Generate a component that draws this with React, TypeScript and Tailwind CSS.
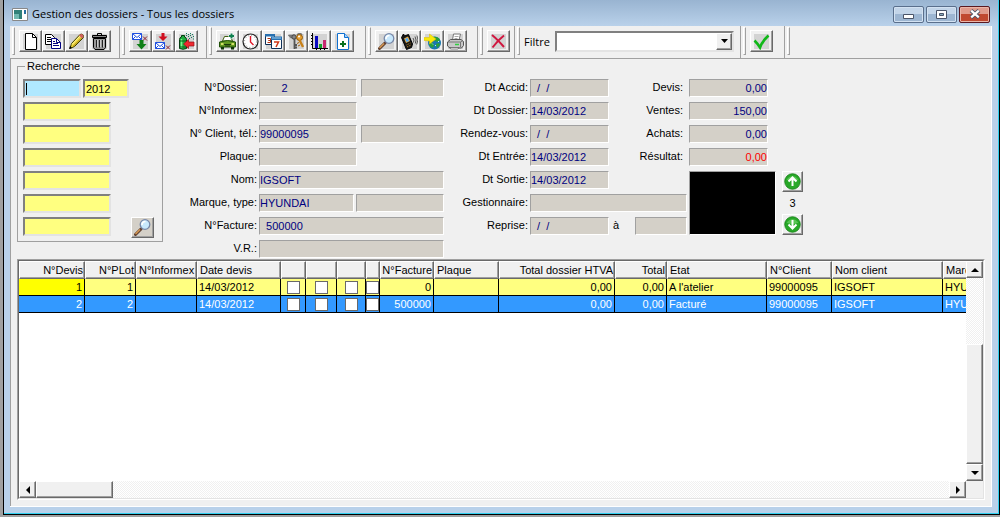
import React, { useState } from "react"
import clsx from "clsx"

const fieldBase = "h-[18px] min-w-0 border border-t-[#a0a0a0] border-l-[#a0a0a0] border-r-white border-b-white bg-[#d4d0c8] text-[11px] leading-4 outline-none"
const searchBase = "h-[19px] border-2 border-t-[#808080] border-l-[#808080] border-r-[#e3e3e3] border-b-[#e3e3e3] px-px text-[11px] leading-4 text-black outline-none"
const raisedEdge = "border border-t-white border-l-white border-r-[#696969] border-b-[#696969] shadow-[inset_-1px_-1px_0_#a0a0a0]"
const raised = `${raisedEdge} bg-[#f0f0f0]`
const track = "bg-[repeating-conic-gradient(#ffffff_0_25%,#f0f0f0_0_50%)] bg-[length:2px_2px]"

/* ---------- icons (17 x 17 grid) ---------- */

const Icon = ({ children, plain }: { children: React.ReactNode; plain?: boolean }) => (
  <svg viewBox="0 0 17 17" className="size-[17px] shrink-0" fill="none" aria-hidden="true">
    {!plain && <path d="M1 1h15v15H1z" fill="#d3d3d3" />}
    {children}
  </svg>
)

const NewIcon = () => (
  <Icon>
    <path d="M3.500 .5h7l4 4v12h-11z" fill="#fff" stroke="#000" />
    <path d="M10.500 .5v4h4" stroke="#000" />
  </Icon>
)

const CopyIcon = () => (
  <Icon>
    <path d="M.5 1.500h6l3 3v7h-9z" fill="#fff" stroke="#000" />
    <path d="M2 4.500h4M2 6.500h5M2 8.500h5" stroke="#000" />
    <path d="M6.500 5.500h5l4 4v6h-9z" fill="#fff" stroke="#000080" />
    <path d="M11.500 5.500v4h4M8 8.500h2M8 10.500h5M8 12.500h6" stroke="#000080" />
  </Icon>
)

const PencilIcon = () => (
  <Icon>
    <path d="M2 15.500l1.500-5L12 1.500q2-1 3 .5t0 3L6.500 13.500z" fill="#f0d840" stroke="#404000" />
    <path d="M4 11.500l8-8.500" stroke="#fff8a0" />
    <path d="M5.500 13l8.500-8.500" stroke="#a08010" />
    <path d="M12 1.500q2-1 3 .5t0 2.500l-1 1-3-3z" fill="#d06060" />
    <path d="M1 16l1-3 2 2z" fill="#000" />
  </Icon>
)

const TrashIcon = () => (
  <Icon>
    <path d="M6.500 2V.5h4V2" stroke="#000" />
    <path d="M1.500 2.500h14v2h-14z" fill="#888" stroke="#000" />
    <path d="M2.500 5.500h12v9l-1.500 2H4l-1.500-2z" fill="#999" stroke="#000" />
    <path d="M5.500 7v7.500M8.500 7v7.500M11.500 7v7.500" stroke="#222" />
    <path d="M6.500 7v7M9.500 7v7M12.500 7v7" stroke="#ddd" strokeWidth=".7" />
  </Icon>
)

const Mail = ({ y }: { y: number }) => (
  <g transform={`translate(0 ${y})`}>
    <path d="M.5 .5h9v6h-9z" fill="#fff" stroke="#2050e0" />
    <path d="M.5 .5L5 4.500 9.500 .5M.5 6.500l3-3M9.500 6.500l-3-3" stroke="#2050e0" />
    <path d="M11 3.500l4 4M15 3.500l-4 4" stroke="#902030" />
  </g>
)

const MailInIcon = () => (
  <Icon>
    <Mail y={0} />
    <path d="M7.500 7h4v4h3l-5 5.500-5-5.500h3z" fill="#108018" />
  </Icon>
)

const MailOutIcon = () => (
  <Icon>
    <Mail y={9} />
    <path d="M6.500 0h3v3.500h3L8 8 3.500 3.500h3z" fill="#d01020" />
  </Icon>
)

const SprayIcon = () => (
  <Icon>
    <path d="M1.500 6.500q0-2 2-2.500V2.500h3V4q2 .5 2 2.500v9q-3.500 1.500-7 0z" fill="#20b040" stroke="#043c10" />
    <path d="M3.500 6v9" stroke="#80f090" strokeWidth="1.500" />
    <path d="M2 8h6M2 14h6" stroke="#046018" />
    <path d="M8 2.500h1M10 1.500h1M12 .5h1M14 1.500h1M10 3.500h1M12 2.500h1M15 3.500h1M13 4.500h1M11 5.500h1M15 6h1M8 .5h1" stroke="#108060" />
    <path d="M5.500 11l5-4.500V9H16v4h-5.500v2.500z" fill="#f02830" stroke="#901018" strokeWidth=".7" />
  </Icon>
)

const CarIcon = () => (
  <Icon>
    <path d="M3.500 8l2-4.500h6l2 4.500z" fill="#fff" stroke="#406010" />
    <path d="M.5 9q8-3 16 0v5H.5z" fill="#609820" stroke="#205008" />
    <path d="M2 14h3v2.500H2zM12 14h3v2.500h-3z" fill="#103808" />
    <path d="M5 11.500h7M6 13h5" stroke="#183808" />
    <path d="M2 11h2.500M12.500 11H15" stroke="#f8f880" strokeWidth="1.500" />
    <path d="M9.500 3h6M12.500 0v6" stroke="#fff" strokeWidth="3" />
    <path d="M10 3h5M12.500 .5v5" stroke="#108050" strokeWidth="2" />
  </Icon>
)

const ClockIcon = () => (
  <Icon>
    <circle cx="8.500" cy="8.500" r="7.500" fill="#fff" stroke="#222" strokeWidth="1.200" />
    <circle cx="8.500" cy="8.500" r="6" stroke="#888" strokeDasharray="1 2.140" />
    <path d="M8.500 3v6l3 3" stroke="#e01828" strokeWidth="1.400" />
  </Icon>
)

const CalendarIcon = () => (
  <Icon>
    <path d="M.5 1.500h9v10h-9z" fill="#fff" stroke="#103058" />
    <path d="M0 1h10v2.500H0z" fill="#2870b0" />
    <path d="M2.500 5.500h3v2h-2 2v2h-3" stroke="#b03010" />
    <path d="M6.500 4.500h10v11h-10z" fill="#fff" stroke="#103058" />
    <path d="M6 3.500h11V7H6z" fill="#2870b0" />
    <path d="M7 5h9" stroke="#a0d0f0" />
    <path d="M9 9h4.500l-2.500 5" stroke="#d03818" strokeWidth="1.500" />
  </Icon>
)

const KeysIcon = () => (
  <Icon>
    <path d="M1 2.500h5l2 2H3zM9 2q3-3 5 0" stroke="#777" strokeWidth="1.500" />
    <circle cx="6" cy="4" r="2.200" fill="#888" stroke="#444" />
    <path d="M6.500 6v10M7 12h2M7 14.500h2" stroke="#555" strokeWidth="1.800" />
    <circle cx="11.500" cy="4.500" r="3" fill="#e8a030" stroke="#905808" />
    <circle cx="11" cy="3.500" r="1" fill="#fff" />
    <path d="M11.500 7l3.500 7" stroke="#c88018" strokeWidth="2.400" />
    <path d="M11 9.500l-2 1M12 12l-2 1" stroke="#a06010" />
  </Icon>
)

const ChartIcon = () => (
  <Icon>
    <path d="M1.500 0v15.500H17" stroke="#000" />
    <path d="M0 2.500h1M0 5.500h1M0 8.500h1M0 11.500h1M5.500 16v1M9.500 16v1M13.500 16v1" stroke="#000" />
    <path d="M4 3h3v12H4z" fill="#0808c0" />
    <path d="M8 11h3v4H8z" fill="#10a028" />
    <path d="M12 7h3v8h-3z" fill="#c82870" />
  </Icon>
)

const AddPageIcon = () => (
  <Icon>
    <path d="M3.500 .5h7l4 4v12h-11z" fill="#fff" stroke="#1070d0" />
    <path d="M10.500 .5v4h4" fill="#a0d0ff" stroke="#1070d0" />
    <path d="M6 11h6M9 8v6" stroke="#087020" strokeWidth="2" />
  </Icon>
)

const LoupeIcon = ({ plain }: { plain?: boolean }) => (
  <Icon plain={plain}>
    <path d="M1.500 15.500L7 10" stroke="#604030" strokeWidth="3" strokeLinecap="round" />
    <path d="M1.500 15L6 10.500" stroke="#d89850" strokeWidth="1.400" />
    <circle cx="11" cy="5.500" r="4.800" fill="#c8e8fc" stroke="#7888a8" strokeWidth="1.300" />
    <path d="M8 6q0-3.500 3.500-3.500" stroke="#fff" strokeWidth="1.600" />
  </Icon>
)

const PhoneIcon = () => (
  <Icon>
    <path d="M.5 4.500L2.500 1l1 2 4-1.500 4 9.500-1 3.500-5 2z" fill="#181818" stroke="#000" />
    <path d="M3 5.500l4-2L9 8l-4 2z" fill="#f0b040" />
    <path d="M4 6l2.500-1.200L8 8l-2.500 1z" fill="#50a8f8" />
    <path d="M5.500 12l4-2M6 14l4-2" stroke="#d09020" strokeDasharray="1 1" />
    <path d="M12 5q1.500 2 .5 4.500M14 3.500q2 3.500 .3 7M16 2.500q2 4.500-.3 9" stroke="#333" strokeWidth=".8" />
  </Icon>
)

const GlobeIcon = () => (
  <Icon>
    <circle cx="10.500" cy="10" r="6.500" fill="#1878b0" />
    <path d="M9 4q5-1 7 3l-2 2-3-1zM6 9l3 1 1 3-2 2-3-3zM12 11l3-1 1 2-3 3z" fill="#28a038" />
    <path d="M8 10.500l1 1M11 12l1 1M14 8l1 1" stroke="#b0f0ff" />
    <path d="M0 4.500h5.500V1L12 6l-6.500 5V8L0 7.500z" fill="#f8e808" stroke="#d8b808" strokeWidth=".5" />
  </Icon>
)

const PrinterIcon = () => (
  <Icon>
    <path d="M5.500 7l1-6h7l-1.500 6z" fill="#fff" stroke="#777" />
    <path d="M7.500 3.500h4M7.500 5.500h3" stroke="#aaa" />
    <path d="M.5 9l3-2.500h10.500l2.500 2v4l-2 2.500H3L.5 13z" fill="#c8c8c8" stroke="#555" />
    <path d="M1 9h12.500l2.500-1.500M13.500 9v5" stroke="#777" />
    <path d="M3 14.500h9l-1 1.500H3.500z" fill="#fff" stroke="#555" strokeWidth=".7" />
    <path d="M8 11.500h4" stroke="#30d040" strokeWidth="1.500" />
  </Icon>
)

const CrossIcon = () => (
  <Icon>
    <path d="M2 2q5 4 12 12" stroke="#d01840" strokeWidth="2" />
    <path d="M14 2.500Q8 7 2.500 14.500" stroke="#d01840" strokeWidth="2" />
  </Icon>
)

const CheckIcon = () => (
  <Icon>
    <path d="M1.500 7.500q3 3 5.500 7 2-6 8.500-12" stroke="#10b818" strokeWidth="2.600" />
  </Icon>
)

const RoundArrow = ({ down }: { down?: boolean }) => (
  <Icon plain>
    <circle cx="8.500" cy="8.500" r="7.800" fill="#28a828" stroke="#188018" strokeWidth=".8" />
    <path d="M2.500 6.500q6-7 12 0-6 3-12 0z" fill="#78d870" opacity=".6" />
    <path d={down ? "M8.500 4v8.500M4.500 8.500l4 4 4-4" : "M8.500 13V4.500M4.500 8.500l4-4 4 4"} stroke="#fff" strokeWidth="2" />
  </Icon>
)

/* ---------- toolbar ---------- */

const ToolButton = ({ label, children }: { label: string; children: React.ReactNode }) => (
  <button
    type="button"
    title={label}
    aria-label={label}
    className={clsx("flex h-[22px] w-[23px] items-center justify-center", raised)}
  >
    {children}
  </button>
)

const Band = ({ className, children }: { className?: string; children?: React.ReactNode }) => (
  <div className={clsx("flex h-8 items-center pb-0.5 pl-0.5", className)}>
    <span className="mr-1 h-7 w-[3px] border border-t-white border-r-[#a0a0a0] border-b-[#a0a0a0] border-l-white" />
    {children}
  </div>
)

const Toolbar = () => {
  const [filter, setFilter] = useState("")

  return (
    <div className="flex divide-x divide-[#a0a0a0] bg-[#f0f0f0]">
      <Band className="pr-2">
        <ToolButton label="Nouveau"><NewIcon /></ToolButton>
        <ToolButton label="Copier"><CopyIcon /></ToolButton>
        <ToolButton label="Modifier"><PencilIcon /></ToolButton>
        <ToolButton label="Supprimer"><TrashIcon /></ToolButton>
      </Band>
      <Band className="pr-2">
        <ToolButton label="Recevoir"><MailInIcon /></ToolButton>
        <ToolButton label="Envoyer"><MailOutIcon /></ToolButton>
        <ToolButton label="Peinture"><SprayIcon /></ToolButton>
      </Band>
      <Band className="pr-[11px]">
        <ToolButton label="Véhicule"><CarIcon /></ToolButton>
        <ToolButton label="Heures"><ClockIcon /></ToolButton>
        <ToolButton label="Agenda"><CalendarIcon /></ToolButton>
        <ToolButton label="Clés"><KeysIcon /></ToolButton>
        <ToolButton label="Statistiques"><ChartIcon /></ToolButton>
        <ToolButton label="Ajouter"><AddPageIcon /></ToolButton>
      </Band>
      <Band className="pr-[10px]">
        <ToolButton label="Rechercher"><LoupeIcon /></ToolButton>
        <ToolButton label="Téléphone"><PhoneIcon /></ToolButton>
        <ToolButton label="Exporter"><GlobeIcon /></ToolButton>
        <ToolButton label="Imprimer"><PrinterIcon /></ToolButton>
      </Band>
      <Band className="pr-1">
        <ToolButton label="Annuler"><CrossIcon /></ToolButton>
      </Band>
      <Band className="pr-[6px]">
        <label htmlFor="filtre" className="w-[31px] pt-0.5 font-['Open_Sans',sans-serif] text-[11px]">
          Filtre
        </label>
        <div className="relative">
          <select
            id="filtre"
            value={filter}
            onChange={(e) => setFilter(e.target.value)}
            className="block h-[21px] w-[179px] appearance-none border-2 border-t-[#808080] border-r-[#e3e3e3] border-b-[#e3e3e3] border-l-[#808080] bg-white px-1 text-[11px] outline-none"
          >
            <option value=""></option>
            <option value="all">Tous les dossiers</option>
          </select>
          <span className={clsx("pointer-events-none absolute top-0.5 right-0.5 flex h-[17px] w-4 items-center justify-center", raised)}>
            <svg viewBox="0 0 7 4" className="h-1 w-[7px]"><path d="M0 0h7L3.500 4z" /></svg>
          </span>
        </div>
      </Band>
      <Band className="pr-[11px]">
        <ToolButton label="Valider"><CheckIcon /></ToolButton>
      </Band>
      <Band className="flex-1" />
    </div>
  )
}

/* ---------- form ---------- */

const Label = ({ htmlFor, children, className }: { htmlFor: string; children: React.ReactNode; className?: string }) => (
  <label htmlFor={htmlFor} className={clsx("pb-0.5 text-right whitespace-nowrap", className)}>
    {children}
  </label>
)

const Field = ({ id, value = "", label, className = "text-[#000080]" }: { id: string; value?: string; label?: string; className?: string }) => (
  <input id={id} readOnly value={value} aria-label={label} className={clsx(fieldBase, className)} />
)

const SearchPanel = () => (
  <fieldset className="mt-px w-[146px] shrink-0 self-start border border-[#a0a0a0] pt-[7px] pr-1 pb-[3px] pl-[5px]">
    <legend className="ml-0.5 px-0.5 leading-3">Recherche</legend>
    <div className="flex flex-col gap-1">
      <div className="flex gap-0.5">
        <div className={clsx("flex w-[58px] items-center bg-[#b0e8ff]", searchBase)}>
          <span className="h-3 w-px bg-black" />
          <input aria-label="Numéro" className="min-w-0 flex-1 bg-transparent outline-none" />
        </div>
        <input aria-label="Année" defaultValue="2012" className={clsx("w-[46px] bg-[#ffff80]", searchBase)} />
      </div>
      {["Informex", "Client", "Plaque", "Nom", "Marque"].map((name) => (
        <input key={name} aria-label={name} className={clsx("w-[88px] bg-[#ffff80]", searchBase)} />
      ))}
      <div className="flex items-start gap-5">
        <input aria-label="Facture" className={clsx("w-[88px] bg-[#ffff80]", searchBase)} />
        <button type="button" aria-label="Rechercher" className={clsx("flex h-[21px] w-[23px] items-center justify-center bg-[#d4d0c8]", raisedEdge)}>
          <LoupeIcon plain />
        </button>
      </div>
    </div>
  </fieldset>
)

const DossierFields = () => (
  <div className="grid shrink-0 grid-cols-[94px_185px] content-start gap-x-0.5 gap-y-[5px] pt-5">
    <Label htmlFor="dossier">N°Dossier:</Label>
    <div className="flex gap-1">
      <Field id="dossier" value="       2" className="w-[98px] text-[#000080]" />
      <Field id="dossier2" label="N°Dossier complément" className="flex-1" />
    </div>
    <Label htmlFor="informex">N°Informex:</Label>
    <Field id="informex" className="w-[98px]" />
    <Label htmlFor="client">N° Client, tél.:</Label>
    <div className="flex gap-1">
      <Field id="client" value="99000095" className="w-[98px] text-[#000080]" />
      <Field id="tel" label="Téléphone" className="flex-1" />
    </div>
    <Label htmlFor="plaque">Plaque:</Label>
    <Field id="plaque" className="w-[98px]" />
    <Label htmlFor="nom">Nom:</Label>
    <Field id="nom" value="IGSOFT" />
    <Label htmlFor="marque">Marque, type:</Label>
    <div className="flex gap-0.5">
      <Field id="marque" value="HYUNDAI" className="w-[95px] text-[#000080]" />
      <Field id="type" label="Type" className="flex-1" />
    </div>
    <Label htmlFor="facture">N°Facture:</Label>
    <Field id="facture" value="  500000" />
    <Label htmlFor="vr">V.R.:</Label>
    <Field id="vr" />
  </div>
)

const dateRows = [
  { id: "accid", label: "Dt Accid:", value: "  /  /", total: "devis", totalLabel: "Devis:", amount: "0,00" },
  { id: "dtdossier", label: "Dt Dossier:", value: "14/03/2012", total: "ventes", totalLabel: "Ventes:", amount: "150,00" },
  { id: "rdv", label: "Rendez-vous:", value: "  /  /", total: "achats", totalLabel: "Achats:", amount: "0,00" },
  { id: "entree", label: "Dt Entrée:", value: "14/03/2012", total: "resultat", totalLabel: "Résultat:", amount: "0,00" },
]

const DateFields = () => (
  <div className="grid grid-cols-[84px_79px_76px_auto] content-start gap-x-0.5 gap-y-[5px] pt-5">
    {dateRows.map((row) => (
      <React.Fragment key={row.id}>
        <Label htmlFor={row.id}>{row.label}</Label>
        <Field id={row.id} value={row.value} />
        <Label htmlFor={row.total} className="pr-1">{row.totalLabel}</Label>
        <Field
          id={row.total}
          value={row.amount}
          className={clsx("w-[79px] text-right", row.total === "resultat" ? "text-[#ff0000]" : "text-[#000080]")}
        />
      </React.Fragment>
    ))}
    <Label htmlFor="sortie">Dt Sortie:</Label>
    <Field id="sortie" value="14/03/2012" />
    <span />
    <div className="row-span-3 flex gap-1.5">
      <div className="w-[87px] border border-t-[#a0a0a0] border-r-white border-b-white border-l-[#a0a0a0] bg-black" />
      <div className="flex flex-col items-center justify-between">
        <button type="button" aria-label="Précédent" className={clsx("flex size-[21px] items-center justify-center", raised)}>
          <RoundArrow />
        </button>
        <span className="leading-4">3</span>
        <button type="button" aria-label="Suivant" className={clsx("flex size-[21px] items-center justify-center", raised)}>
          <RoundArrow down />
        </button>
      </div>
    </div>
    <Label htmlFor="gestionnaire">Gestionnaire:</Label>
    <Field id="gestionnaire" className="col-span-2" />
    <Label htmlFor="reprise">Reprise:</Label>
    <Field id="reprise" value="  /  /" />
    <div className="flex justify-between pl-0.5">
      <label htmlFor="heure">à</label>
      <Field id="heure" className="w-[52px]" />
    </div>
  </div>
)

/* ---------- grid ---------- */

interface Column {
  title: string
  width: string
  right?: boolean
  check?: boolean
}

const columns: Column[] = [
  { title: "N°Devis", width: "w-[66px]", right: true },
  { title: "N°PLot", width: "w-[51px]", right: true },
  { title: "N°Informex", width: "w-[61px]" },
  { title: "Date devis", width: "w-[84px]" },
  { title: "", width: "w-[25px]", check: true },
  { title: "", width: "w-[31px]", check: true },
  { title: "", width: "w-[29px]", check: true },
  { title: "", width: "w-[14px]", check: true },
  { title: "N°Facture", width: "w-[54px]", right: true },
  { title: "Plaque", width: "w-[65px]" },
  { title: "Total dossier HTVA", width: "w-[116px]", right: true },
  { title: "Total", width: "w-[52px]", right: true },
  { title: "Etat", width: "w-[100px]" },
  { title: "N°Client", width: "w-[65px]" },
  { title: "Nom client", width: "w-[111px]" },
  { title: "Marque", width: "w-[60px]" },
]

const rows = [
  ["1", "1", "", "14/03/2012", "", "", "", "", "0", "", "0,00", "0,00", "A l'atelier", "99000095", "IGSOFT", "HYUNDAI"],
  ["2", "2", "", "14/03/2012", "", "", "", "", "500000", "", "0,00", "0,00", "Facturé", "99000095", "IGSOFT", "HYUNDAI"],
]

const DossierTable = () => {
  const [selected, setSelected] = useState(1)

  return (
    <table className="w-[984px] table-fixed border-separate border-spacing-0 whitespace-nowrap">
      <thead>
        <tr>
          {columns.map((col, i) => (
            <th
              key={i}
              className={clsx(
                "h-[18px] overflow-hidden p-0 leading-4 font-normal",
                raised,
                col.width,
                col.right ? "pr-px text-right" : "pl-0.5 text-left",
              )}
            >
              {col.title}
            </th>
          ))}
        </tr>
      </thead>
      <tbody>
        {rows.map((row, r) => (
          <tr key={r} onClick={() => setSelected(r)} className={r === selected ? "bg-[#3399ff] text-white" : "bg-[#ffff80] text-black"}>
            {columns.map((col, i) => (
              <td
                key={i}
                className={clsx(
                  "h-[17px] overflow-hidden border-r border-b border-black p-0 leading-4",
                  col.check ? "text-center" : col.right ? "pr-0.5 text-right" : "pl-0.5",
                  i === 0 && r !== selected && "bg-[#ffff00]",
                )}
              >
                {col.check ? (
                  <input
                    type="checkbox"
                    aria-label={`Option ${i - 3}, devis ${row[0]}`}
                    className="mx-auto block size-[13px] appearance-none border border-[#696969] bg-white checked:bg-[#3399ff]"
                  />
                ) : (
                  row[i]
                )}
              </td>
            ))}
          </tr>
        ))}
      </tbody>
    </table>
  )
}

const ScrollButton = ({ label, path, className }: { label: string; path: string; className: string }) => (
  <button type="button" aria-label={label} className={clsx("flex shrink-0 items-center justify-center", raised, className)}>
    <svg viewBox="0 0 8 8" className="size-2"><path d={path} /></svg>
  </button>
)

const DossierGrid = () => (
  <div className="mr-[6px] mb-[6px] ml-[6px] flex flex-1 flex-col border border-t-[#a0a0a0] border-r-white border-b-white border-l-[#a0a0a0]">
    <div className="flex flex-1 flex-col border border-t-[#696969] border-r-[#e3e3e3] border-b-[#e3e3e3] border-l-[#696969] bg-white">
      <div className="flex flex-1">
        <div className="w-0 flex-1 overflow-hidden">
          <DossierTable />
        </div>
        <div className={clsx("flex w-[17px] flex-col", track)}>
          <ScrollButton label="Haut" path="M0 6h8L4 2z" className="h-[17px]" />
          <div className="flex-1" />
          <div className={clsx("h-[120px]", raised)} />
          <ScrollButton label="Bas" path="M0 2h8L4 6z" className="h-[17px]" />
        </div>
      </div>
      <div className="flex h-[17px]">
        <div className={clsx("flex flex-1", track)}>
          <ScrollButton label="Gauche" path="M6 0v8L2 4z" className="w-[17px]" />
          <div className={clsx("w-[77px]", raised)} />
          <div className="flex-1" />
          <ScrollButton label="Droite" path="M2 0v8l4-4z" className="w-[17px]" />
        </div>
        <div className="w-[17px] bg-[#f0f0f0]" />
      </div>
    </div>
  </div>
)

/* ---------- window ---------- */

const captionButton = "flex h-[17px] w-[31px] items-center justify-center rounded-[2px] border"
const captionBlue = "border-[#5a6f8c] bg-linear-to-b from-[#c3d5e9] from-50% to-[#9db6d2] to-50% shadow-[inset_0_0_0_1px_#d3e2f2]"

const TitleBar = () => (
  <div className="flex h-[26px] items-center bg-linear-to-b from-[#99b4d1] to-[#b9d1ea] pr-2 pl-2">
    <svg viewBox="0 0 16 13" className="mt-0.5 mr-1 h-[13px] w-4" aria-hidden="true">
      <path d="M.5 .5h15v12H.5z" fill="#fff" stroke="#888" />
      <path d="M2 2h8v9H2z" fill="#308078" />
      <path d="M2 6h5v5H2z" fill="#70b8b0" />
      <path d="M12 2h2v4h-2z" fill="#2870a0" />
    </svg>
    <h1 className="mt-0.5 flex-1 font-['Open_Sans',sans-serif] text-[11px] leading-4">Gestion des dossiers - Tous les dossiers</h1>
    <div className="mt-0.5 flex gap-0.5">
      <button type="button" aria-label="Réduire" className={clsx(captionButton, captionBlue)}>
        <svg viewBox="0 0 11 11" className="size-[11px]"><path d="M.5 5.500h10v4H.5z" fill="#fff" stroke="#4a5468" /></svg>
      </button>
      <button type="button" aria-label="Agrandir" className={clsx(captionButton, captionBlue)}>
        <svg viewBox="0 0 11 9" className="h-[9px] w-[11px]">
          <path d="M.5 .5h10v8H.5z" fill="#fff" stroke="#4a5468" />
          <path d="M3.500 3.500h4v2h-4z" fill="#8ab" stroke="#4a5468" />
        </svg>
      </button>
      <button
        type="button"
        aria-label="Fermer"
        className={clsx(captionButton, "border-[#5a1820] bg-linear-to-b from-[#e09a8c] from-50% to-[#c04830] to-50% shadow-[inset_0_0_0_1px_#eab5a8]")}
      >
        <svg viewBox="0 0 12 10" className="h-[10px] w-3" fill="none">
          <path d="M2 1.500l8 7M10 1.500l-8 7" stroke="#4a5468" strokeWidth="4" />
          <path d="M2.200 1.700l7.600 6.600M9.800 1.700L2.200 8.300" stroke="#fff" strokeWidth="2.200" />
        </svg>
      </button>
    </div>
  </div>
)

export default function App() {
  return (
    <div className="flex min-h-screen flex-col bg-[#a0a0a0] pb-0.5 pl-[3px] font-['Liberation_Sans',Arial,sans-serif] text-[11px] leading-4 text-black">
      <div className="flex flex-1 flex-col border-r border-b border-l border-black">
        <div className="flex flex-1 flex-col border-r border-b border-[#30d0f0] bg-[#b9d1ea]">
          <TitleBar />
          <div className="mr-[6px] mb-[6px] ml-[6px] flex flex-1 flex-col border-r border-b border-white bg-[#f0f0f0]">
            <Toolbar />
            <main className="flex flex-1 flex-col border-t border-l border-[#a0a0a0]">
              <div className="flex pb-px pl-[6px]">
                <SearchPanel />
                <DossierFields />
                <DateFields />
              </div>
              <DossierGrid />
            </main>
          </div>
        </div>
      </div>
    </div>
  )
}
